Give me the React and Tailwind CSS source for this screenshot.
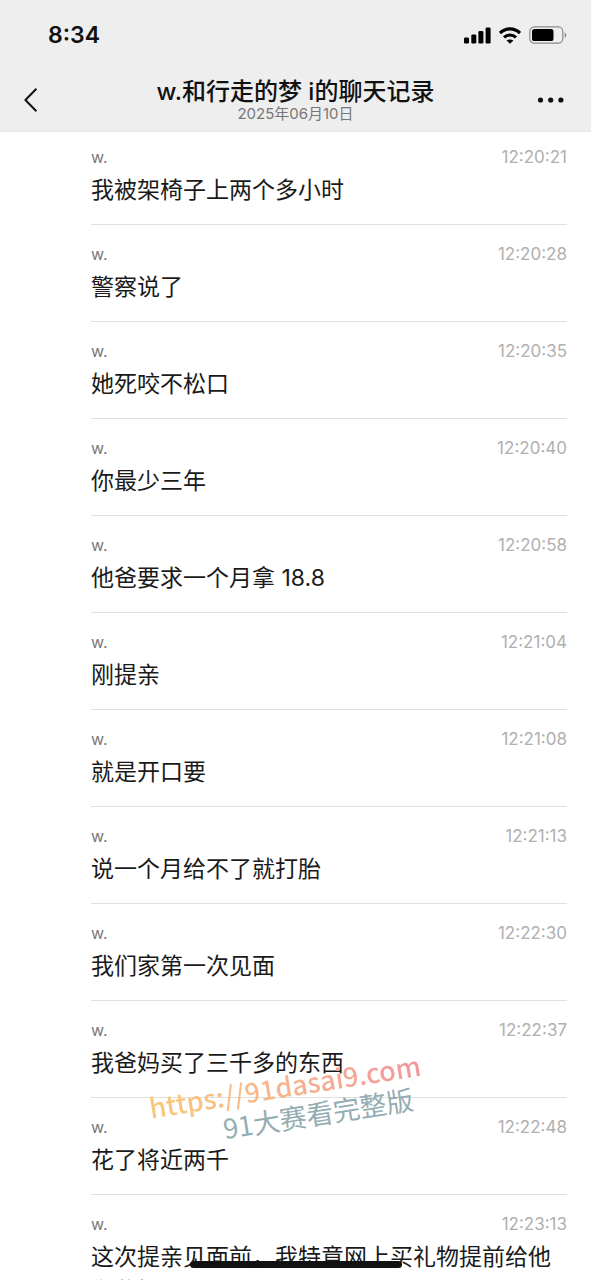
import React from 'react';

const messages = [
  { time: '12:20:21', text: '我被架椅子上两个多小时' },
  { time: '12:20:28', text: '警察说了' },
  { time: '12:20:35', text: '她死咬不松口' },
  { time: '12:20:40', text: '你最少三年' },
  { time: '12:20:58', text: '他爸要求一个月拿 18.8' },
  { time: '12:21:04', text: '刚提亲' },
  { time: '12:21:08', text: '就是开口要' },
  { time: '12:21:13', text: '说一个月给不了就打胎' },
  { time: '12:22:30', text: '我们家第一次见面' },
  { time: '12:22:37', text: '我爸妈买了三千多的东西' },
  { time: '12:22:48', text: '花了将近两千' },
  { time: '12:23:13', text: '这次提亲见面前，我特意网上买礼物提前给他们爸妈' },
];

function StatusIcons() {
  return (
    <div className="flex items-center gap-2">
      <svg width="27" height="17" viewBox="0 0 27 17" fill="#000">
        <rect x="0" y="10.5" width="5" height="6" rx="1.3" />
        <rect x="7.3" y="7.5" width="5" height="9" rx="1.3" />
        <rect x="14.4" y="4" width="5" height="12.5" rx="1.3" />
        <rect x="21.6" y="0.5" width="5" height="16" rx="1.3" />
      </svg>
      <svg width="22" height="17" viewBox="0 0 22 17" fill="none" stroke="#000" strokeWidth="3.2">
        <path d="M1 6C6.8 0.4 15.2 0.4 21 6" />
        <path d="M5 10.4C8.5 7.2 13.5 7.2 17 10.4" />
        <path d="M11 16.8L7.6 13.6C9.6 12 12.4 12 14.4 13.6Z" fill="#000" stroke="none" />
      </svg>
      <svg width="38" height="18" viewBox="0 0 38 18" fill="none">
        <rect x="0.8" y="0.8" width="33" height="16.4" rx="4.6" stroke="#8b8b8b" strokeWidth="1.2" />
        <rect x="3" y="3" width="21.5" height="12" rx="2.6" fill="#000" />
        <path d="M35.6 6.2C37.8 7 37.8 11 35.6 11.8Z" fill="#8b8b8b" />
      </svg>
    </div>
  );
}

function Header() {
  return (
    <header className="shrink-0 bg-[#eeeeee] border-b border-gray-200 pb-0.5 text-[#111111]">
      <div className="flex h-[70px] items-center justify-between pl-12 pr-6">
        <span className="text-[23px] leading-7 font-semibold">8:34</span>
        <StatusIcons />
      </div>
      <div className="flex h-[59px] items-center justify-between px-6">
        <button type="button" aria-label="返回" className="w-8">
          <svg width="14" height="24" viewBox="0 0 14 24" fill="none" stroke="#111" strokeWidth="2" strokeLinejoin="round">
            <path d="M12.4 0.8L1.4 12L12.4 23.2" />
          </svg>
        </button>
        <div className="text-center">
          <h1 className="text-[24px] leading-7 font-medium">w.和行走的梦 i的聊天记录</h1>
          <p className="text-[15px] leading-4 text-[#777777]">2025年06月10日</p>
        </div>
        <button type="button" aria-label="更多" className="flex w-8 justify-end">
          <svg width="30" height="6" viewBox="0 0 30 6" fill="#111">
            <circle cx="3.5" cy="3" r="2.6" />
            <circle cx="13.7" cy="3" r="2.6" />
            <circle cx="23.9" cy="3" r="2.6" />
          </svg>
        </button>
      </div>
    </header>
  );
}

function Message({ time, text }) {
  return (
    <li className="border-b border-[#e0e0e0] py-[17px]">
      <div className="flex items-center justify-between leading-6">
        <span className="text-[16px] text-[#777777]">w.</span>
        <time className="text-[17px] text-[#b0b0b0]">{time}</time>
      </div>
      <p className="mt-1 text-[23px] leading-[34px] text-[#1a1a1a]">{text}</p>
    </li>
  );
}

function Watermark() {
  return (
    <div className="absolute bottom-[146px] left-[150px] -rotate-9 font-['Noto_Sans_CJK_SC'] whitespace-nowrap">
      <p className="bg-linear-to-r from-[#fac878] via-[#f7b48c] to-[#f2969f] bg-clip-text text-[27px] leading-8 font-medium text-transparent">
        https://91dasai9.com
      </p>
      <p className="pl-[70px] text-[27px] leading-8 text-[#94adb3]">91大赛看完整版</p>
    </div>
  );
}

function App() {
  return (
    <div className="relative flex h-screen flex-col overflow-hidden bg-white font-['Inter','Noto_Sans_CJK_SC',sans-serif]">
      <Header />
      <main className="min-h-0 flex-1 overflow-hidden pr-6 pl-[91px]">
        <ul className="-mt-1">
          {messages.map((message) => (
            <Message key={message.time} time={message.time} text={message.text} />
          ))}
        </ul>
      </main>
      <Watermark />
      <div className="absolute bottom-3 left-1/2 h-[7px] w-[212px] -translate-x-1/2 rounded-full bg-[#111111]" />
    </div>
  );
}

export default App;
